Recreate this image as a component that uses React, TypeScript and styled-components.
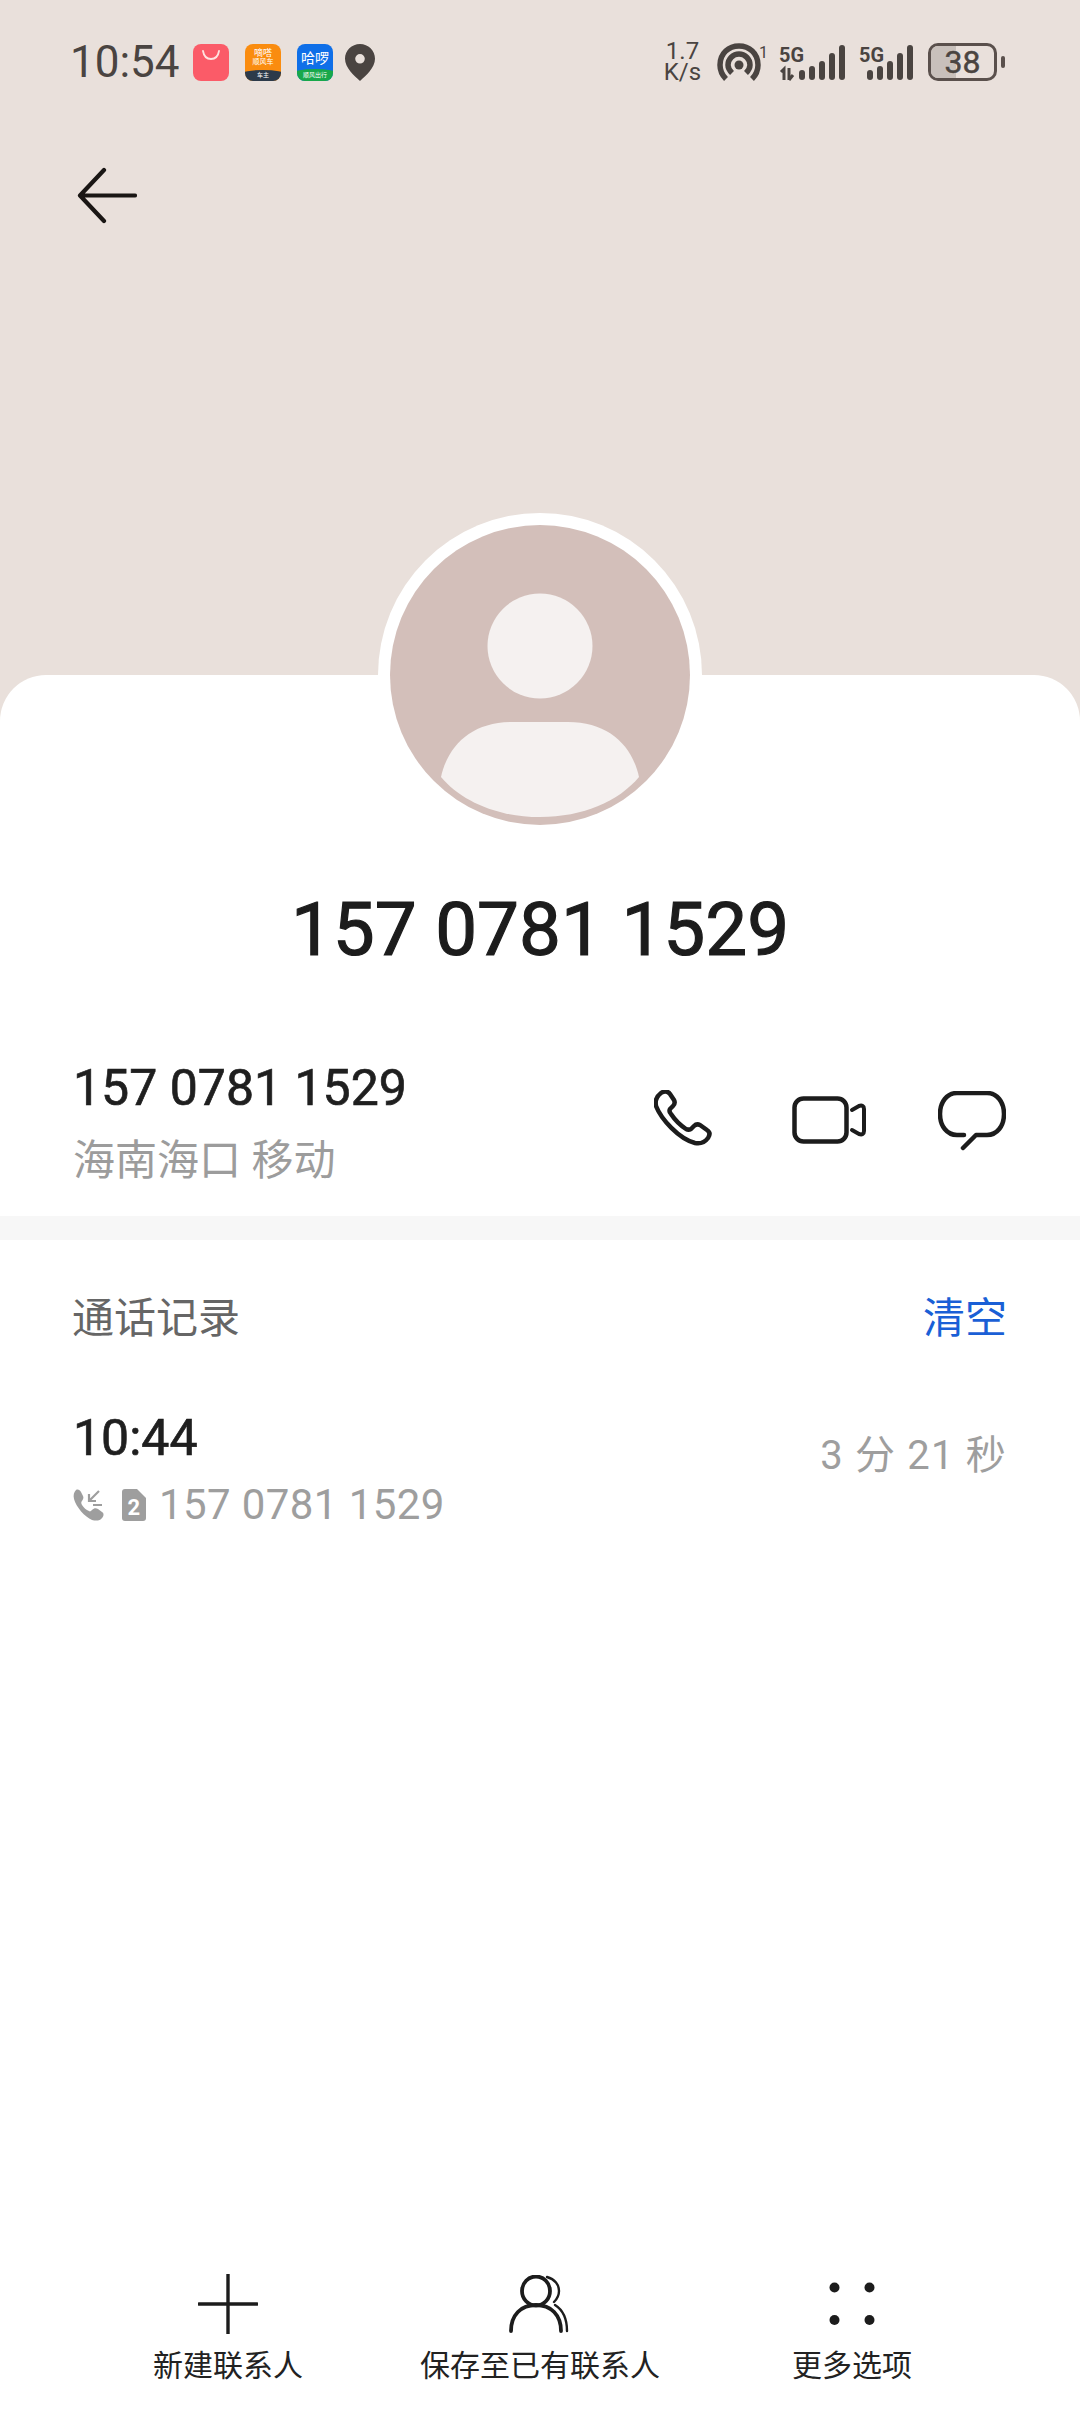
import React from 'react';
import styled, { createGlobalStyle } from 'styled-components';

const GlobalStyle = createGlobalStyle`
  html, body {
    margin: 0;
    padding: 0;
    background: #fff;
  }
  * {
    box-sizing: border-box;
  }
`;

const Page = styled.div`
  width: 1080px;
  height: 2412px;
  display: flex;
  flex-direction: column;
  overflow: hidden;
  background: #fff;
  font-family: Roboto, "Noto Sans CJK SC", sans-serif;
`;

const Hero = styled.header`
  height: 723px;
  flex: none;
  background: #e9e0db;
  padding: 43px 75px 0 70px;
`;

const StatusBar = styled.div`
  height: 38px;
  display: flex;
  align-items: center;
  justify-content: space-between;
`;

const StatusLeft = styled.div`
  display: flex;
  align-items: center;
`;

const StatusRight = styled.div`
  display: flex;
  align-items: center;
`;

const Clock = styled.span`
  width: 123px;
  font-size: 44px;
  line-height: 38px;
  color: #4a4441;
`;

const AppIcon = styled.div<{ $bg: string; $gap: number }>`
  position: relative;
  width: 36px;
  height: 37px;
  margin-right: ${({ $gap }) => $gap}px;
  border-radius: 8px;
  overflow: hidden;
  background: ${({ $bg }) => $bg};
  text-align: center;
  color: #fff;
`;

const TinyLabel = styled.span<{ $size: number; $top: number }>`
  position: absolute;
  left: 0;
  right: 0;
  top: ${({ $top }) => $top}px;
  font-size: ${({ $size }) => $size}px;
  line-height: 1;
  white-space: nowrap;
`;

const AppFooter = styled.div<{ $bg: string; $height: number }>`
  position: absolute;
  left: -4px;
  right: -4px;
  bottom: 0;
  height: ${({ $height }) => $height}px;
  background: ${({ $bg }) => $bg};
  border-radius: 50% 50% 0 0 / 4px 4px 0 0;
`;

const Speed = styled.div`
  width: 53px;
  text-align: center;
  font-size: 24px;
  line-height: 21px;
  color: #4a4441;
`;

const Battery = styled.div`
  position: relative;
  width: 69px;
  height: 38px;
  margin-left: 14px;
  border: 3px solid #5a504c;
  border-radius: 10px;
  overflow: hidden;
  display: flex;
  align-items: center;
  justify-content: center;
  font-size: 32px;
  line-height: 32px;
  color: #4a4441;
  -webkit-text-stroke: 0.5px #4a4441;
`;

const BatteryFill = styled.div`
  position: absolute;
  left: 0;
  top: 0;
  bottom: 0;
  width: 25px;
  background: #c8c0bb;
`;

const BatteryText = styled.span`
  position: relative;
`;

const BatteryTip = styled.div`
  width: 4px;
  height: 12px;
  margin-left: 4px;
  border-radius: 2px;
  background: #5a504c;
`;

const SignalGap = styled.div`
  width: 14px;
`;

const BackButton = styled.button`
  display: block;
  margin: 86px 0 0 7px;
  padding: 0;
  border: 0;
  background: none;
  height: 60px;
`;

const Card = styled.main`
  position: relative;
  flex: 1;
  margin-top: -48px;
  background: #fff;
  border-radius: 46px 46px 0 0;
  display: flex;
  flex-direction: column;
`;

const AvatarRing = styled.div`
  width: 324px;
  height: 324px;
  margin: -162px auto 0;
  padding: 12px;
  border-radius: 50%;
  background: #fff;
`;

const Title = styled.h1`
  margin: 48px 0 0;
  text-align: center;
  font-size: 74.600px;
  line-height: 90px;
  font-weight: 400;
  -webkit-text-stroke: 1.2px #1c1c1c;
  color: #1c1c1c;
`;

const InfoRow = styled.section`
  height: 158px;
  margin-top: 83px;
  padding: 0 75px 0 73px;
  display: flex;
  align-items: flex-start;
  justify-content: space-between;
`;

const NumberLine = styled.div`
  font-size: 50px;
  line-height: 60px;
  font-weight: 400;
  -webkit-text-stroke: 0.7px #1f1f1f;
  color: #1f1f1f;
`;

const Carrier = styled.div`
  margin-top: 13px;
  font-size: 42px;
  line-height: 60px;
  color: #9c9c9c;
`;

const Actions = styled.div`
  display: flex;
  align-items: center;
  height: 64px;
  margin: 31px -1px 0 0;
`;

const Divider = styled.div`
  height: 24px;
  flex: none;
  background: #f7f7f7;
`;

const SectionHead = styled.div`
  margin-top: 51px;
  padding: 0 73px 0 72px;
  display: flex;
  justify-content: space-between;
  align-items: center;
  font-size: 42px;
  line-height: 56px;
`;

const SectionTitle = styled.span`
  color: #666;
`;

const ClearLink = styled.span`
  color: #1a5fd6;
`;

const CallRow = styled.div`
  margin-top: 62px;
  padding: 0 73px;
  display: flex;
  justify-content: space-between;
  align-items: flex-start;
`;

const CallTime = styled.div`
  font-size: 50px;
  line-height: 58px;
  font-weight: 400;
  -webkit-text-stroke: 0.7px #1f1f1f;
  color: #1f1f1f;
`;

const CallMeta = styled.div`
  margin-top: 10px;
  display: flex;
  align-items: center;
  font-size: 42px;
  line-height: 56px;
  letter-spacing: 0.4px;
  color: #9e9e9e;
`;

const CallNumber = styled.span`
  margin-left: 13px;
`;

const Duration = styled.div`
  margin-top: 19px;
  font-size: 40px;
  line-height: 56px;
  letter-spacing: 1.200px;
  color: #9e9e9e;
`;

const Toolbar = styled.nav`
  margin-top: auto;
  height: 144px;
  padding: 0 72px;
  display: grid;
  grid-template-columns: repeat(3, 1fr);
`;

const ToolItem = styled.div`
  display: flex;
  flex-direction: column;
  align-items: center;
`;

const ToolIcon = styled.div`
  height: 72px;
  display: flex;
  align-items: center;
`;

const ToolLabel = styled.div`
  margin-top: 4px;
  font-size: 30px;
  line-height: 44px;
  color: #222;
`;

const PinIcon = () => (
  <svg width="30" height="37" viewBox="0 0 30 37" style={{ marginLeft: 12 }}>
    <path
      fillRule="evenodd"
      d="M15 0C6.7 0 0 6.6 0 14.8 0 24 9 31.5 15 37c6-5.5 15-13 15-22.2C30 6.6 23.3 0 15 0Zm0 10a4.8 4.8 0 1 1 0 9.6 4.8 4.8 0 0 1 0-9.6Z"
      fill="#4a4441"
    />
  </svg>
);

const WifiIcon = () => (
  <svg width="52" height="38" viewBox="0 0 52 38" style={{ marginLeft: 8, marginRight: 10 }}>
    <g fill="none" stroke="#4a4441" strokeWidth="5.500" strokeLinecap="butt">
      <path d="M9 36C4 31 3 25 3 22 3 10 12 3 22 3s19 7 19 19c0 3-1 9-6 14" />
      <path d="M15 30c-2-2-4-5-4-8 0-6 5-11 11-11s11 5 11 11c0 3-2 6-4 8" />
    </g>
    <circle cx="22" cy="22" r="4.500" fill="#4a4441" />
    <text x="42" y="15" fontSize="16" fontFamily="Roboto" fill="#4a4441">1</text>
  </svg>
);

const SignalIcon = ({ dual }: { dual?: boolean }) => {
  const bars = [10, 14, 19, 27, 35];
  const width = dual ? 66 : 55;
  return (
    <svg width={width} height="38" viewBox={`0 0 ${width} 38`}>
      <text
        x="0"
        y="19"
        fontSize="20"
        fontWeight="700"
        fontFamily="Roboto"
        fill="#4a4441"
        textLength="25"
        lengthAdjust="spacingAndGlyphs"
      >
        5G
      </text>
      {dual && (
        <path d="M2 29l3-3v11M10 25v12M10 37l4-5" stroke="#4a4441" strokeWidth="3" fill="none" />
      )}
      {bars.map((h, i) => {
        const x = (dual ? 20 : 8) + i * 10;
        return <rect key={i} x={x} y={37 - h} width="6" height={h} rx="3" fill="#4a4441" />;
      })}
    </svg>
  );
};

const BackArrow = () => (
  <svg width="60" height="60" viewBox="0 0 60 60" style={{ display: 'block' }}>
    <path
      d="M27 3 3 28.500h55M3 28.500 27 54"
      fill="none"
      stroke="#1a1614"
      strokeWidth="4.200"
      strokeLinecap="round"
      strokeLinejoin="round"
    />
  </svg>
);

const AvatarArt = () => (
  <svg width="300" height="300" viewBox="0 0 300 300" style={{ display: 'block' }}>
    <circle cx="150" cy="150" r="150" fill="#d3bfba" />
    <circle cx="150" cy="121" r="52.500" fill="#f5f1f0" />
    <path
      d="M51 252C58 220 82 197 122 197h56c40 0 64 23 71 55-20 24-56 40-99 40s-79-16-99-40Z"
      fill="#f5f1f0"
    />
  </svg>
);

const PhoneIcon = () => (
  <svg width="62" height="62" viewBox="0 0 62 62" style={{ marginRight: 76 }}>
    <path
      d="M7 3c3-2 7-2 9 1l4 6c1 2 1 4-1 6l-3 3c-1 2 0 4 1 5 4 6 9 11 15 15 2 1 3 1 5 0l3-3c2-2 4-2 6-1l7 5c3 2 3 5 1 8-3 4-8 6-13 5C25 49 7 29 2 16 1 11 3 6 7 3Z"
      fill="none"
      stroke="#1c1c1c"
      strokeWidth="4.500"
      strokeLinejoin="round"
    />
  </svg>
);

const VideoIcon = () => (
  <svg width="74" height="50" viewBox="0 0 74 50" style={{ marginRight: 72 }}>
    <rect x="2.500" y="2.500" width="52" height="43" rx="9" fill="none" stroke="#1c1c1c" strokeWidth="4.500" />
    <path
      d="M60 14l7-4c3-1 5 0 5 3v22c0 3-2 4-5 3l-7-4"
      fill="none"
      stroke="#1c1c1c"
      strokeWidth="4"
      strokeLinecap="round"
      strokeLinejoin="round"
    />
  </svg>
);

const MessageIcon = () => (
  <svg width="68" height="60" viewBox="0 0 68 60">
    <path
      d="M26 44h-7C9 44 2 35 2 23S9 2 19 2h30c10 0 17 9 17 21s-7 21-17 21H38L25 57"
      fill="none"
      stroke="#1c1c1c"
      strokeWidth="4.500"
      strokeLinecap="round"
      strokeLinejoin="round"
    />
  </svg>
);

const IncomingIcon = () => (
  <svg width="31" height="32" viewBox="0 0 31 32">
    <path
      d="M3 1c2-1 4 0 5 2l2 4c1 2 0 3-1 5-1 1-1 2 0 4 2 3 4 5 7 6 1 1 2 0 3-1 2-2 4-2 6-1l4 3c2 1 2 4 0 6-2 3-6 3-10 2C12 28 3 18 1 10 0 6 1 3 3 1Z"
      fill="#9e9e9e"
    />
    <path
      d="M27 2 17 12M17 5v7h7M21 16h9"
      stroke="#9e9e9e"
      strokeWidth="2.200"
      fill="none"
      transform="translate(-1 0)"
    />
  </svg>
);

const SimIcon = () => (
  <svg width="24" height="32" viewBox="0 0 24 32" style={{ marginLeft: 18 }}>
    <path d="M3 0h12l9 9v20a3 3 0 0 1-3 3H3a3 3 0 0 1-3-3V3a3 3 0 0 1 3-3Z" fill="#9e9e9e" />
    <text x="12" y="26" fontSize="22" fontWeight="700" textAnchor="middle" fontFamily="Roboto" fill="#fff">
      2
    </text>
  </svg>
);

const PlusIcon = () => (
  <svg width="60" height="60" viewBox="0 0 60 60">
    <path d="M30 0v60" stroke="#1c1c1c" strokeWidth="3.400" strokeLinecap="round" />
    <path d="M1 30h58" stroke="#1c1c1c" strokeWidth="3.400" strokeLinecap="round" />
  </svg>
);

const PersonIcon = () => (
  <svg width="62" height="58" viewBox="0 0 62 58">
    <g fill="none" stroke="#1c1c1c" strokeLinecap="round">
      <ellipse cx="27" cy="16" rx="14" ry="14.500" strokeWidth="3.800" />
      <path d="M2 56c0-16 10-26 25-26s25 10 25 26" strokeWidth="3.800" />
      <path d="M38 2c8 2 12 8 12 14s-3 9-5 11" strokeWidth="2.400" />
      <path d="M46 30c8 5 12 14 12 26" strokeWidth="2.400" />
    </g>
  </svg>
);

const DotsIcon = () => (
  <svg width="46" height="44" viewBox="0 0 46 44">
    <circle cx="5.500" cy="5.500" r="5" fill="#1c1c1c" />
    <circle cx="40.500" cy="5.500" r="5" fill="#1c1c1c" />
    <circle cx="5.500" cy="38" r="5" fill="#1c1c1c" />
    <circle cx="40.500" cy="38" r="5" fill="#1c1c1c" />
  </svg>
);

const BagHandle = () => (
  <svg width="36" height="37" viewBox="0 0 36 37" style={{ display: 'block' }}>
    <path d="M10 7c1 6 4 8 8 8s7-2 8-8" fill="none" stroke="#ffe3df" strokeWidth="1.800" strokeLinecap="round" />
  </svg>
);

export default function App() {
  return (
    <Page>
      <GlobalStyle />
      <Hero>
        <StatusBar>
          <StatusLeft>
            <Clock>10:54</Clock>
            <AppIcon $bg="#fb5b68" $gap={16}>
              <BagHandle />
            </AppIcon>
            <AppIcon $bg="#fa8c0f" $gap={16}>
              <TinyLabel $size={9} $top={5}>嘀嗒</TinyLabel>
              <TinyLabel $size={7} $top={15}>顺风车</TinyLabel>
              <AppFooter $bg="#2c3a4a" $height={11} />
              <TinyLabel $size={6} $top={28}>车主</TinyLabel>
            </AppIcon>
            <AppIcon $bg="#0f6fe8" $gap={0}>
              <TinyLabel $size={14} $top={7}>哈啰</TinyLabel>
              <AppFooter $bg="#18a84a" $height={12} />
              <TinyLabel $size={6} $top={28}>顺风出行</TinyLabel>
            </AppIcon>
            <PinIcon />
          </StatusLeft>
          <StatusRight>
            <Speed>
              1.7
              <br />
              K/s
            </Speed>
            <WifiIcon />
            <SignalIcon dual />
            <SignalGap />
            <SignalIcon />
            <Battery>
              <BatteryFill />
              <BatteryText>38</BatteryText>
            </Battery>
            <BatteryTip />
          </StatusRight>
        </StatusBar>
        <BackButton aria-label="返回">
          <BackArrow />
        </BackButton>
      </Hero>

      <Card>
        <AvatarRing>
          <AvatarArt />
        </AvatarRing>
        <Title>157 0781 1529</Title>
        <InfoRow>
          <div>
            <NumberLine>157 0781 1529</NumberLine>
            <Carrier>海南海口 移动</Carrier>
          </div>
          <Actions>
            <PhoneIcon />
            <VideoIcon />
            <MessageIcon />
          </Actions>
        </InfoRow>
        <Divider />
        <SectionHead>
          <SectionTitle>通话记录</SectionTitle>
          <ClearLink>清空</ClearLink>
        </SectionHead>
        <CallRow>
          <div>
            <CallTime>10:44</CallTime>
            <CallMeta>
              <IncomingIcon />
              <SimIcon />
              <CallNumber>157 0781 1529</CallNumber>
            </CallMeta>
          </div>
          <Duration>3 分 21 秒</Duration>
        </CallRow>
        <Toolbar>
          <ToolItem>
            <ToolIcon>
              <PlusIcon />
            </ToolIcon>
            <ToolLabel>新建联系人</ToolLabel>
          </ToolItem>
          <ToolItem>
            <ToolIcon>
              <PersonIcon />
            </ToolIcon>
            <ToolLabel>保存至已有联系人</ToolLabel>
          </ToolItem>
          <ToolItem>
            <ToolIcon>
              <DotsIcon />
            </ToolIcon>
            <ToolLabel>更多选项</ToolLabel>
          </ToolItem>
        </Toolbar>
      </Card>
    </Page>
  );
}
